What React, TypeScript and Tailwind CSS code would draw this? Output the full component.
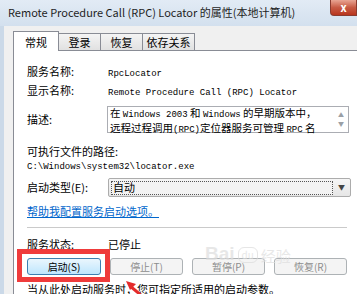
import type { ReactNode } from "react";

const cjk = { fontFamily: '"Noto Sans CJK SC", "Noto Sans", sans-serif' };
const mono = { fontFamily: '"Liberation Mono", "Noto Sans CJK SC", monospace' };

function M({ children }: { children: ReactNode }) {
  return (
    <span className="text-[9px]" style={mono}>
      {children}
    </span>
  );
}

function Tab({ label, active, w }: { label: string; active?: boolean; w: string }) {
  if (active) {
    return (
      <div
        className={`${w} relative z-10 -mb-px flex h-[20px] items-start justify-center border border-b-0 border-[#898c95] bg-white pt-[2px] text-[11px] text-black`}
      >
        {label}
      </div>
    );
  }
  return (
    <div
      className={`${w} -ml-px flex h-[17px] items-center justify-center border border-b-0 border-[#898c95] bg-gradient-to-b from-[#f4f4f4] to-[#e1e1e1] text-[11px] text-black first:ml-0`}
    >
      {label}
    </div>
  );
}

function Btn({ label, primary }: { label: string; primary?: boolean }) {
  if (primary) {
    return (
      <div className="flex h-[17px] w-[74px] items-center justify-center rounded-[3px] border border-[#3c7fb1] bg-gradient-to-b from-[#eaf6fd] to-[#bee6fd] text-[10px] text-black">
        {label}
      </div>
    );
  }
  return (
    <div className="flex h-[17px] w-[73px] items-center justify-center rounded-[3px] border border-[#adb2b5] bg-[#f4f4f4] text-[10px] text-[#8d8d8d]">
      {label}
    </div>
  );
}

export default function App() {
  return (
    <div className="relative h-[294px] w-[357px] overflow-hidden bg-[#cbd9e8]" style={cjk}>
      {/* title bar */}
      <div className="flex h-[26px] items-start bg-gradient-to-b from-[#e2ebf5] to-[#d3e0ee]">
        <div className="pl-[8px] pt-[4px] text-[11px] whitespace-nowrap text-[#1e1e1e]">
          Remote Procedure Call (RPC) Locator 的属性(本地计算机)
        </div>
        <div className="ml-auto flex h-[16px] w-[27px] shrink-0 items-center justify-center rounded-bl-[4px] border border-t-0 border-[#8a3b2f] bg-gradient-to-b from-[#e8a493] via-[#c75a44] to-[#b8341c] text-[11px] font-bold text-white">
          x
        </div>
      </div>

      {/* dialog body */}
      <div className="ml-[4px] h-[268px] bg-[#f0f0f0] pl-[9px] pt-[5px]">
        <div className="flex h-[19px] items-end">
          <Tab label="常规" active w="w-[46px]" />
          <Tab label="登录" w="w-[43px]" />
          <Tab label="恢复" w="w-[43px]" />
          <Tab label="依存关系" w="w-[53px]" />
        </div>

        <div className="h-[260px] border-l border-t border-[#898c95] bg-white pl-[13px] pt-[13px] text-[11px] text-black">
          <div className="grid grid-cols-[81px_242px] items-center gap-y-[5px]">
            <div className="h-[14px] leading-[14px]">服务名称:</div>
            <div className="h-[14px] leading-[14px]">
              <M>RpcLocator</M>
            </div>
            <div className="h-[14px] leading-[14px]">显示名称:</div>
            <div className="h-[14px] leading-[14px]">
              <M>Remote Procedure Call (RPC) Locator</M>
            </div>
          </div>

          <div className="mt-[9px] grid grid-cols-[80px_242px] items-center">
            <div>描述:</div>
            <div className="flex h-[27px] border border-[#abadb3] bg-white">
              <div className="flex-1 pl-[2px] pt-[0px] text-[10.5px] leading-[12.5px] whitespace-nowrap">
                <div>
                  在 <M>Windows 2003</M> 和 <M>Windows</M> 的早期版本中，
                </div>
                <div>
                  远程过程调用<M>(RPC)</M>定位器服务可管理 <M>RPC</M> 名
                </div>
              </div>
              <div className="flex w-[14px] flex-col items-center justify-between py-[5px] text-[6px] leading-none text-[#9aa0a6]">
                <span>▲</span>
                <span>▼</span>
              </div>
            </div>
          </div>

          <div className="mt-[11px] h-[14px] leading-[14px]">可执行文件的路径:</div>
          <div className="h-[13px] leading-[13px]">
            <M>C:\Windows\system32\locator.exe</M>
          </div>

          <div className="mt-[7px] grid grid-cols-[81px_243px] items-center">
            <div>启动类型(E):</div>
            <div className="flex h-[19px] items-center rounded-[2px] border border-[#acacac] bg-gradient-to-b from-[#f6f6f6] to-[#e6e6e6] pl-[2px]">
              <div className="flex h-[14px] flex-1 items-center border border-dotted border-[#555] bg-[#f3f3f3] pl-[1px] text-[11px] leading-none">
                自动
              </div>
              <div className="flex w-[17px] items-center justify-center text-[7px] text-[#444]">▼</div>
            </div>
          </div>

          <div className="mt-[7px] h-[14px] text-[11px] leading-[14px] text-[#0066cc] underline">
            帮助我配置服务启动选项。
          </div>

          <div className="mt-[9px] h-px w-[320px] bg-[#cacaca]" />

          <div className="mt-[9px] grid h-[14px] grid-cols-[81px_200px] items-center leading-[14px]">
            <div>服务状态:</div>
            <div>已停止</div>
          </div>

          <div className="mt-[7px] flex gap-[9px]">
            <Btn label="启动(S)" primary />
            <Btn label="停止(T)" />
            <Btn label="暂停(P)" />
            <Btn label="恢复(R)" />
          </div>

          <div className="mt-[7px] whitespace-nowrap text-[11px] leading-[14px]">
            当从此处启动服务时，您可指定所适用的启动参数。
          </div>
        </div>
      </div>

      {/* annotation: red box */}
      <div className="absolute left-[17px] top-[249px] h-[33px] w-[93px] border-[5px] border-[#ef3b3b]" />

      {/* annotation: red arrow */}
      <svg className="absolute left-[118px] top-[276px]" width="30" height="22" viewBox="0 0 30 22">
        <line x1="24" y1="20" x2="12" y2="10" stroke="#e42b2b" strokeWidth="3" />
        <polygon points="8,5 18,8 12,14" fill="#e42b2b" />
      </svg>

      {/* faint watermark */}
      <div className="pointer-events-none absolute left-[205px] top-[244px] flex items-end gap-[3px] text-[#dedede] opacity-70">
        <span className="text-[19px] font-bold leading-none" style={{ fontFamily: '"Liberation Sans", sans-serif' }}>
          Bai
        </span>
        <span className="rounded-[6px] border border-[#dcdcdc] px-[3px] text-[10px] leading-[14px]">du</span>
        <span className="text-[15px] leading-none">经验</span>
      </div>
    </div>
  );
}
